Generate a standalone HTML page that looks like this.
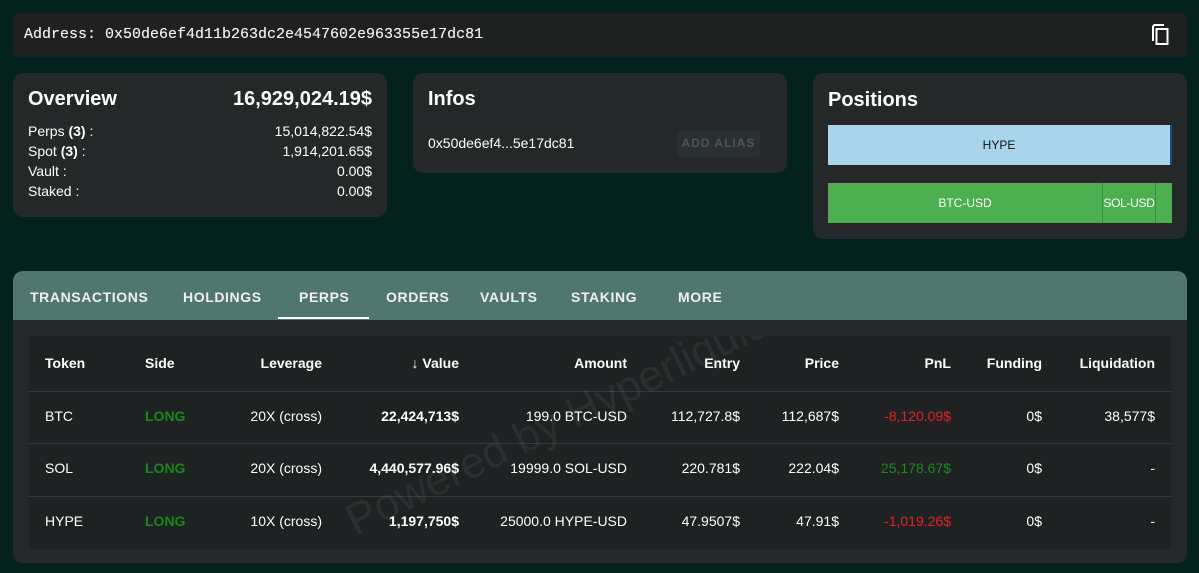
<!DOCTYPE html>
<html><head><meta charset="utf-8"><style>
*{box-sizing:border-box;margin:0;padding:0}
body{width:1199px;height:573px;background:#03211d;font-family:"Liberation Sans",sans-serif;color:#fff;position:relative;overflow:hidden}
.card{position:absolute;background:#242828;border-radius:10px}
.addr{left:13px;top:13px;width:1174px;height:44px;background:#1f2121;border-radius:6px}
.addr span{position:absolute;left:11px;top:13px;font-family:"Liberation Mono",monospace;font-size:15px;color:#eee;text-shadow:0 0 0.4px #eee}
h2{font-size:20px;font-weight:bold;position:absolute}
.row{position:absolute;left:15px;right:15px;font-size:14px;display:flex;justify-content:space-between}
.tabs{left:13px;top:271px;width:1174px;height:292px;background:#242828;border-radius:10px;overflow:hidden}
.tabbar{position:absolute;left:0;top:0;width:100%;height:49px;background:#4f7670}
.tab{position:absolute;top:18px;font-size:14px;font-weight:bold;letter-spacing:.6px;color:#f0f0f0}
.tbl{position:absolute;left:16px;top:65px;width:1142px;height:213px;background:#1f2222;overflow:hidden}
.c{position:absolute;font-size:14px;white-space:nowrap}
.r{text-align:right}
.line{position:absolute;left:0;width:100%;height:1px;background:#353a3a}
.g{color:#168a16;font-weight:bold}
.red{color:#e62020}
</style></head><body>
<div class="card addr"><span>Address: 0x50de6ef4d11b263dc2e4547602e963355e17dc81</span>
<svg style="position:absolute;left:1136px;top:10px" width="22" height="24" viewBox="0 0 22 24"><path d="M4 18V4a2 2 0 0 1 2-2h9" fill="none" stroke="#fff" stroke-width="2"/><rect x="7.5" y="6" width="11" height="15" fill="none" stroke="#fff" stroke-width="2"/></svg></div>

<div class="card" style="left:13px;top:73px;width:374px;height:144px">
<h2 style="left:15px;top:15px">Overview</h2><h2 style="right:15px;top:15px">16,929,024.19$</h2>
<div class="row" style="top:50px"><span>Perps <b>(3)</b> :</span><span>15,014,822.54$</span></div>
<div class="row" style="top:70px"><span>Spot <b>(3)</b> :</span><span>1,914,201.65$</span></div>
<div class="row" style="top:90px"><span>Vault :</span><span>0.00$</span></div>
<div class="row" style="top:110px"><span>Staked :</span><span>0.00$</span></div>
</div>

<div class="card" style="left:413px;top:73px;width:374px;height:100px">
<h2 style="left:15px;top:15px">Infos</h2>
<div class="c" style="left:15px;top:62px">0x50de6ef4...5e17dc81</div>
<div style="position:absolute;left:264px;top:57px;width:83px;height:27px;background:#2a2f2f;border-radius:4px;font-size:12px;font-weight:bold;color:#4c5656;letter-spacing:1px;text-align:center;line-height:27px">ADD ALIAS</div>
</div>

<div class="card" style="left:813px;top:73px;width:374px;height:166px">
<h2 style="left:15px;top:16px">Positions</h2>
<div style="position:absolute;left:15px;top:52px;width:344px;height:40px;background:#a8d5ec;border-right:2px solid #1a4a80;color:#111;font-size:12px;text-align:center;line-height:40px">HYPE</div>
<div style="position:absolute;left:15px;top:110px;width:344px;height:40px;background:#4caf50;font-size:12px;line-height:40px;overflow:hidden;white-space:nowrap">
<span style="position:absolute;left:0;width:274px;text-align:center">BTC-USD</span>
<span style="position:absolute;left:274px;width:54px;height:40px;text-align:center;border-left:1px solid #3c8a40;border-right:1px solid #3c8a40;letter-spacing:-0.3px">SOL-USD</span></div>
</div>

<div class="card tabs">
<div class="tabbar">
<div class="tab" style="left:17px">TRANSACTIONS</div>
<div class="tab" style="left:170px">HOLDINGS</div>
<div class="tab" style="left:286px">PERPS</div>
<div class="tab" style="left:373px">ORDERS</div>
<div class="tab" style="left:467px">VAULTS</div>
<div class="tab" style="left:558px">STAKING</div>
<div class="tab" style="left:665px">MORE</div>
<div style="position:absolute;left:265px;top:46px;width:91px;height:2px;background:#fff"></div>
</div>
<div class="tbl">
<div class="line" style="top:55px"></div><div class="line" style="top:107px"></div><div class="line" style="top:160px"></div>
<div style="position:absolute;left:331px;top:160px;transform:rotate(-26deg);transform-origin:left bottom;font-size:44px;line-height:50px;color:rgba(255,255,255,0.06);white-space:nowrap">Powered by Hyperliquid</div>
</div>
<div style="position:absolute;left:0;top:84px;width:100%;font-weight:bold">
<div class="c" style="left:32px">Token</div><div class="c" style="left:132px">Side</div>
<div class="c r" style="right:865px">Leverage</div><div class="c r" style="right:728px">&#8595; Value</div>
<div class="c r" style="right:560px">Amount</div><div class="c r" style="right:447px">Entry</div>
<div class="c r" style="right:348px">Price</div><div class="c r" style="right:236px">PnL</div>
<div class="c r" style="right:145px">Funding</div><div class="c r" style="right:32px">Liquidation</div>
</div>
<div style="position:absolute;left:0;top:137px;width:100%">
<div class="c" style="left:32px">BTC</div><div class="c g" style="left:132px">LONG</div>
<div class="c r" style="right:865px">20X (cross)</div><div class="c r" style="right:728px;font-weight:bold">22,424,713$</div>
<div class="c r" style="right:560px">199.0 BTC-USD</div><div class="c r" style="right:447px">112,727.8$</div>
<div class="c r" style="right:348px">112,687$</div><div class="c r red" style="right:236px">-8,120.09$</div>
<div class="c r" style="right:145px">0$</div><div class="c r" style="right:32px">38,577$</div>
</div>
<div style="position:absolute;left:0;top:189px;width:100%">
<div class="c" style="left:32px">SOL</div><div class="c g" style="left:132px">LONG</div>
<div class="c r" style="right:865px">20X (cross)</div><div class="c r" style="right:728px;font-weight:bold">4,440,577.96$</div>
<div class="c r" style="right:560px">19999.0 SOL-USD</div><div class="c r" style="right:447px">220.781$</div>
<div class="c r" style="right:348px">222.04$</div><div class="c r" style="right:236px;color:#1a8a1a">25,178.67$</div>
<div class="c r" style="right:145px">0$</div><div class="c r" style="right:32px">-</div>
</div>
<div style="position:absolute;left:0;top:242px;width:100%">
<div class="c" style="left:32px">HYPE</div><div class="c g" style="left:132px">LONG</div>
<div class="c r" style="right:865px">10X (cross)</div><div class="c r" style="right:728px;font-weight:bold">1,197,750$</div>
<div class="c r" style="right:560px">25000.0 HYPE-USD</div><div class="c r" style="right:447px">47.9507$</div>
<div class="c r" style="right:348px">47.91$</div><div class="c r red" style="right:236px">-1,019.26$</div>
<div class="c r" style="right:145px">0$</div><div class="c r" style="right:32px">-</div>
</div>
</div>
</body></html>
